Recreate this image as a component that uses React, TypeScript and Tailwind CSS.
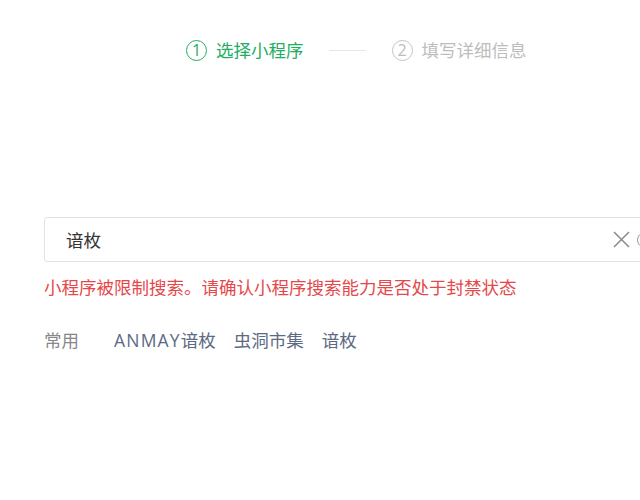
import React from 'react';

const Circled = ({ n, color }: { n: string; color: string }) => (
  <span
    className={`inline-flex items-center justify-center w-[21px] h-[21px] rounded-full border-[1.2px] text-[16px] leading-none ${color}`}
  >
    {n}
  </span>
);

export default function App() {
  return (
    <div
      className="w-[640px] h-[500px] bg-white overflow-hidden text-[17.5px] leading-[24px]"
      style={{ fontFamily: '"Open Sans", "Noto Sans CJK SC", sans-serif' }}
    >
      {/* STEPS */}
      <div className="flex items-center pl-[186px] pt-[38px]">
        <div className="flex items-center gap-[9px] text-[#22ad62]">
          <Circled n="1" color="border-[#22ad62]" />
          <span>选择小程序</span>
        </div>
        <div className="w-[37px] h-px bg-[#e6e6e6] ml-[25px] mr-[26px]" />
        <div className="flex items-center gap-[9px] text-[#bdbdbd]">
          <Circled n="2" color="border-[#c4c4c4]" />
          <span>填写详细信息</span>
        </div>
      </div>

      {/* SEARCH */}
      <div className="pl-[44px] mt-[155px]">
        <div className="w-[620px] h-[45px] border border-[#e3e3e3] rounded-[3px] flex items-center pl-[21px] pr-[10px]">
          <span className="flex-1 text-[#353535]">谙枚</span>
          <svg width="17" height="17" viewBox="0 0 17 17" className="text-[#8a8a8a]">
            <path d="M1 1L16 16M16 1L1 16" stroke="currentColor" strokeWidth="1.5" fill="none" />
          </svg>
          <div className="w-[16px] h-[16px] rounded-full border-[1.5px] border-[#9a9a9a] ml-[7px]" />
        </div>

        <p className="mt-[13px] text-[#e5484a]">小程序被限制搜索。请确认小程序搜索能力是否处于封禁状态</p>

        <div className="flex items-center mt-[29px]">
          <span className="text-[#888888] mr-[35px]">常用</span>
          <div className="flex gap-[18px] text-[#5d6a84]">
            <span>
              <span className="tracking-[1.2px]">ANMAY</span>谙枚
            </span>
            <span>虫洞市集</span>
            <span>谙枚</span>
          </div>
        </div>
      </div>
    </div>
  );
}
